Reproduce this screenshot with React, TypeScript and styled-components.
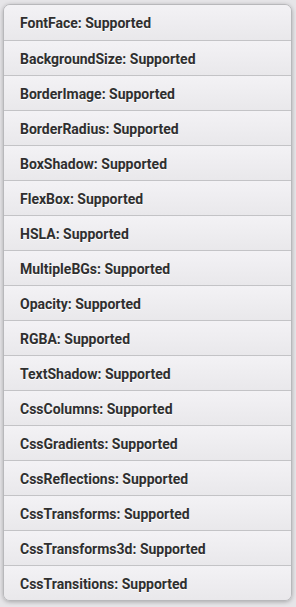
import React from "react";
import styled, { createGlobalStyle } from "styled-components";

const GlobalStyle = createGlobalStyle`
  html, body {
    margin: 0;
    padding: 0;
    background: #e6e5e8;
  }
  body {
    font-family: Roboto, "Liberation Sans", sans-serif;
  }
`;

const Page = styled.div`
  padding: 4px 4px 6px 3px;
`;

const List = styled.ul`
  list-style: none;
  margin: 0;
  padding: 0;
  border: 1px solid #b8b8bb;
  border-radius: 7px;
  overflow: hidden;
  box-shadow: 0 1px 4px rgba(0, 0, 0, 0.28);
`;

const Item = styled.li`
  display: flex;
  align-items: center;
  box-sizing: border-box;
  height: 35px;
  padding: 2px 15px 0 16px;
  border-top: 1px solid #c3c3c6;
  background: linear-gradient(#f3f2f5, #e9e8eb);
  color: #2f2f2f;
  font-size: 14px;
  font-weight: 700;
  text-shadow: 0 1px 0 #fff;
  &:first-child {
    border-top: none;
    padding-top: 1px;
  }
`;

const features = [
  "FontFace",
  "BackgroundSize",
  "BorderImage",
  "BorderRadius",
  "BoxShadow",
  "FlexBox",
  "HSLA",
  "MultipleBGs",
  "Opacity",
  "RGBA",
  "TextShadow",
  "CssColumns",
  "CssGradients",
  "CssReflections",
  "CssTransforms",
  "CssTransforms3d",
  "CssTransitions",
];

export default function App() {
  return (
    <Page>
      <GlobalStyle />
      <List>
        {features.map((f) => (
          <Item key={f}>{f}: Supported</Item>
        ))}
      </List>
    </Page>
  );
}
